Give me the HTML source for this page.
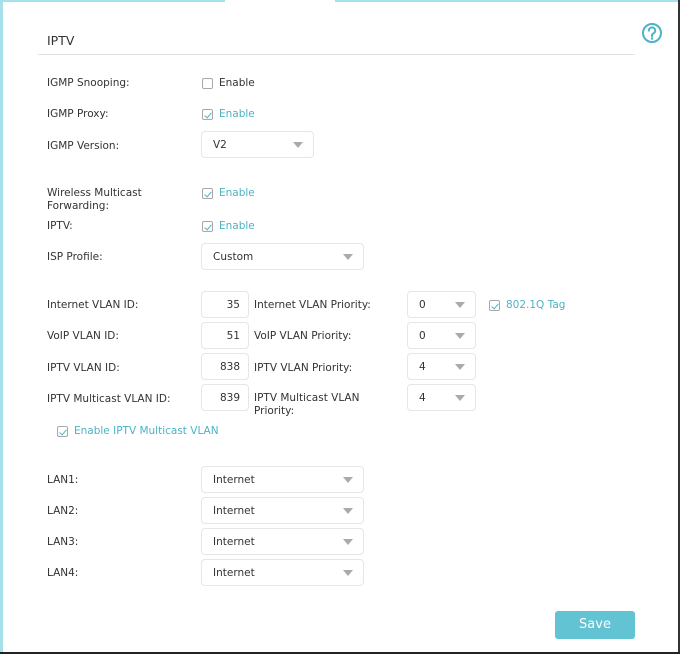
<!DOCTYPE html>
<html><head><meta charset="utf-8"><style>
*{margin:0;padding:0;box-sizing:border-box}
body{width:680px;height:654px;background:#fff;position:relative;overflow:hidden;font-family:"DejaVu Sans","Liberation Sans",sans-serif;font-size:10.5px;color:#333}
.a{position:absolute;white-space:nowrap}
.t{margin-top:1px}
.l{position:absolute;left:47px;line-height:13px;margin-top:1px}
.cb{position:absolute;width:11px;height:11px;border:1px solid #a8a8a8;border-radius:2px;background:#fff;margin-top:1px}
.cb.on::after{content:"";position:absolute;left:3px;top:1px;width:3px;height:6px;border:solid #4bb3c4;border-width:0 1.5px 1.5px 0;transform:rotate(40deg)}
.en{color:#4bb3c4}
.box{position:absolute;border:1px solid #e6e6e6;border-radius:4px;background:#fff;height:27px;line-height:26px;padding-left:11px}
.box .ar{position:absolute;right:10px;top:10px;width:0;height:0;border-left:5px solid transparent;border-right:5px solid transparent;border-top:6px solid #aaa}
.inp{position:absolute;border:1px solid #e6e6e6;border-radius:4px;height:27px;line-height:26px;text-align:right;padding-right:8px;width:48px;left:201px}
</style></head><body>
<div class="a" style="left:0;top:0;width:3px;height:654px;background:#a6e0e8"></div>
<div class="a" style="left:0;top:0;width:225px;height:2px;background:#a6e0e8"></div>
<div class="a" style="left:335px;top:0;width:345px;height:2px;background:#a6e0e8"></div>
<div class="a" style="left:678px;top:0;width:2px;height:654px;background:#333"></div>
<div class="a" style="left:0;top:652px;width:680px;height:2px;background:#222"></div>

<div class="a" style="left:47px;top:33px;font-size:12.5px;color:#333">IPTV</div>
<div class="a" style="left:38px;top:54px;width:597px;height:1px;background:#e2e2e2"></div>
<svg class="a" style="left:641px;top:22px" width="22" height="22" viewBox="0 0 22 22"><circle cx="11" cy="11" r="9" fill="none" stroke="#4bb3c4" stroke-width="2"/><path d="M7.8 8.6a3.2 3.2 0 1 1 4.6 2.9c-1 .5-1.4 1-1.4 2v.8" fill="none" stroke="#4bb3c4" stroke-width="2" stroke-linecap="round"/><circle cx="11" cy="16.6" r="1.2" fill="#4bb3c4"/></svg>

<div class="l" style="top:76px">IGMP Snooping:</div>
<div class="cb" style="left:202px;top:77px"></div><div class="a t" style="left:219px;top:76px">Enable</div>
<div class="l" style="top:107px">IGMP Proxy:</div>
<div class="cb on" style="left:202px;top:108px"></div><div class="a t en" style="left:219px;top:107px">Enable</div>
<div class="l" style="top:139px">IGMP Version:</div>
<div class="box" style="left:201px;top:131px;width:113px">V2<span class="ar"></span></div>

<div class="l" style="top:186px">Wireless Multicast<br>Forwarding:</div>
<div class="cb on" style="left:202px;top:187px"></div><div class="a t en" style="left:219px;top:186px">Enable</div>
<div class="l" style="top:219px">IPTV:</div>
<div class="cb on" style="left:202px;top:220px"></div><div class="a t en" style="left:219px;top:219px">Enable</div>
<div class="l" style="top:250px">ISP Profile:</div>
<div class="box" style="left:201px;top:243px;width:163px">Custom<span class="ar"></span></div>

<div class="l" style="top:298px">Internet VLAN ID:</div>
<div class="inp" style="top:291px">35</div>
<div class="a t" style="left:254px;top:298px">Internet VLAN Priority:</div>
<div class="box" style="left:407px;top:291px;width:69px">0<span class="ar"></span></div>
<div class="cb on" style="left:489px;top:299px"></div><div class="a t en" style="left:506px;top:298px">802.1Q Tag</div>

<div class="l" style="top:329px">VoIP VLAN ID:</div>
<div class="inp" style="top:322px">51</div>
<div class="a t" style="left:254px;top:329px">VoIP VLAN Priority:</div>
<div class="box" style="left:407px;top:322px;width:69px">0<span class="ar"></span></div>

<div class="l" style="top:361px">IPTV VLAN ID:</div>
<div class="inp" style="top:353px">838</div>
<div class="a t" style="left:254px;top:361px">IPTV VLAN Priority:</div>
<div class="box" style="left:407px;top:353px;width:69px">4<span class="ar"></span></div>

<div class="l" style="top:392px">IPTV Multicast VLAN ID:</div>
<div class="inp" style="top:384px">839</div>
<div class="a t" style="left:254px;top:391px;line-height:13px">IPTV Multicast VLAN<br>Priority:</div>
<div class="box" style="left:407px;top:384px;width:69px">4<span class="ar"></span></div>

<div class="cb on" style="left:57px;top:425px"></div><div class="a t en" style="left:74px;top:424px">Enable IPTV Multicast VLAN</div>

<div class="l" style="top:473px">LAN1:</div>
<div class="box" style="left:201px;top:466px;width:163px">Internet<span class="ar"></span></div>
<div class="l" style="top:504px">LAN2:</div>
<div class="box" style="left:201px;top:497px;width:163px">Internet<span class="ar"></span></div>
<div class="l" style="top:535px">LAN3:</div>
<div class="box" style="left:201px;top:528px;width:163px">Internet<span class="ar"></span></div>
<div class="l" style="top:566px">LAN4:</div>
<div class="box" style="left:201px;top:559px;width:163px">Internet<span class="ar"></span></div>

<div class="a" style="left:555px;top:611px;width:80px;height:28px;background:#62c3d2;border-radius:3px;color:#fff;font-size:13px;line-height:28px;text-align:center">Save</div>
</body></html>
